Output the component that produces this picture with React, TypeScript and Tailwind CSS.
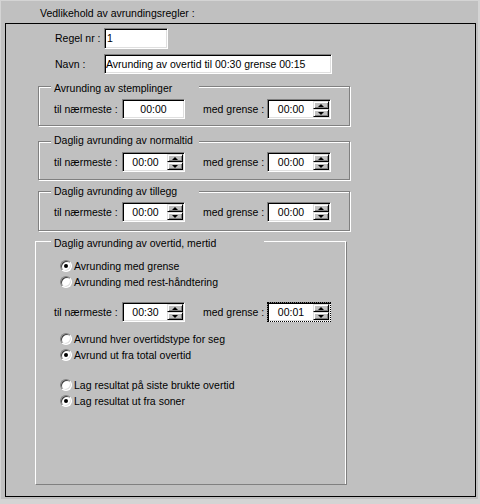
import React from 'react';

type Kids = { children?: React.ReactNode; className?: string };

const Sunken: React.FC<Kids> = ({ children, className = '' }) => (
  <div
    className={`flex items-center bg-white border border-t-[#808080] border-l-[#808080] border-r-white border-b-white shadow-[inset_1px_1px_0_#000,inset_-1px_-1px_0_#dfdfdf] ${className}`}
  >
    {children}
  </div>
);

const SpinBtn: React.FC<{ up?: boolean }> = ({ up }) => (
  <div className="flex-1 flex items-center justify-center bg-[#c0c0c0] border border-t-[#dfdfdf] border-l-[#dfdfdf] border-r-black border-b-black shadow-[inset_1px_1px_0_#fff,inset_-1px_-1px_0_#808080]">
    {up ? (
      <span className="w-0 h-0 border-x-[3px] border-x-transparent border-b-[3px] border-b-black" />
    ) : (
      <span className="w-0 h-0 border-x-[3px] border-x-transparent border-t-[3px] border-t-black" />
    )}
  </div>
);

const TimeBox: React.FC<{ value: string; spin?: boolean; focus?: boolean; className?: string }> = ({
  value,
  spin = true,
  focus = false,
  className = '',
}) => (
  <Sunken
    className={`h-[20px] p-[1px] ${focus ? 'outline outline-1 outline-dotted outline-black outline-offset-[-1px]' : ''} ${className}`}
  >
    <span className="flex-1 text-center">{value}</span>
    {spin && (
      <div className="flex flex-col w-[16px] h-full">
        <SpinBtn up />
        <SpinBtn />
      </div>
    )}
  </Sunken>
);

const Radio: React.FC<{ checked?: boolean; label: string }> = ({ checked, label }) => (
  <div className="flex items-center h-[16px] pl-[24px]">
    <div className="w-[12px] h-[12px] rounded-full bg-white border border-t-[#808080] border-l-[#808080] border-r-white border-b-white shadow-[inset_1px_1px_0_#404040,inset_-1px_-1px_0_#dfdfdf] flex items-center justify-center">
      {checked && <div className="w-[4px] h-[4px] rounded-full bg-black" />}
    </div>
    <span className="ml-[2px]">{label}</span>
  </div>
);

const TimeRow: React.FC<{ a: string; b: string; spinA?: boolean; focusB?: boolean; className?: string }> = ({
  a,
  b,
  spinA = true,
  focusB = false,
  className = '',
}) => (
  <div className={`flex items-center h-[20px] ${className}`}>
    <span className="w-[68px]">til nærmeste :</span>
    <TimeBox value={a} spin={spinA} className="w-[63px]" />
    <span className="ml-[18px] w-[64px]">med grense :</span>
    <TimeBox value={b} focus={focusB} className="w-[64px]" />
  </div>
);

const Group: React.FC<Kids & { title: string; titleClass: string }> = ({ title, titleClass, className = '', children }) => (
  <div
    className={`relative w-[312px] border border-[#808080] shadow-[inset_1px_1px_0_#fff,1px_1px_0_#fff] ${className}`}
  >
    <span className={`absolute h-[13px] bg-[#c0c0c0] pl-[3px] whitespace-nowrap ${titleClass}`}>{title}</span>
    {children}
  </div>
);

export default function App() {
  return (
    <div className="w-[480px] h-[504px] bg-[#d4d4d4] pt-[1px] pl-[1px]">
      <div className="w-[477px] h-[498px] bg-[#c0c0c0] text-black text-[10.5px] leading-[13px] font-['Liberation_Sans',Arial,sans-serif]">
        <div className="h-[22px] pt-[6px] pl-[39px]">Vedlikehold av avrundingsregler :</div>

        <div className="ml-[4px] w-[471px] h-[474px] border border-black">
          <div className="mt-[4px] flex items-center h-[21px]">
            <span className="ml-[49px] w-[49px]">Regel nr :</span>
            <Sunken className="w-[64px] h-[21px] pl-[2px]">1</Sunken>
          </div>
          <div className="mt-[5px] flex items-center h-[20px]">
            <span className="ml-[49px] w-[49px]">Navn :</span>
            <Sunken className="w-[228px] h-[20px] pl-[1px]">Avrunding av overtid til 00:30 grense 00:15</Sunken>
          </div>

          <Group
            title="Avrunding av stemplinger"
            titleClass="left-[12px] top-[-5px] w-[148px]"
            className="ml-[32px] mt-[12px] h-[40px] pt-[12px] pl-[15px]"
          >
            <TimeRow a="00:00" b="00:00" spinA={false} />
          </Group>

          <Group
            title="Daglig avrunding av normaltid"
            titleClass="left-[12px] top-[-8px] w-[148px]"
            className="ml-[32px] mt-[15px] h-[39px] pt-[10px] pl-[15px]"
          >
            <TimeRow a="00:00" b="00:00" />
          </Group>

          <Group
            title="Daglig avrunding av tillegg"
            titleClass="left-[12px] top-[-7px] w-[148px]"
            className="ml-[32px] mt-[11px] h-[40px] pt-[10px] pl-[15px]"
          >
            <TimeRow a="00:00" b="00:00" />
          </Group>

          <div className="relative ml-[29px] mt-[10px] w-[312px] h-[244px] border border-t-white border-l-white border-r-[#808080] border-b-[#808080] shadow-[inset_-1px_0_0_#fff]">
            <span className="absolute left-[15px] top-[-5px] h-[13px] w-[213px] bg-[#c0c0c0] pl-[3px] whitespace-nowrap">
              Daglig avrunding av overtid, mertid
            </span>
            <div className="mt-[16px]">
              <Radio checked label="Avrunding med grense" />
              <Radio label="Avrunding med rest-håndtering" />
            </div>
            <TimeRow a="00:30" b="00:01" focusB className="mt-[12px] pl-[18px]" />
            <div className="mt-[9px]">
              <Radio label="Avrund hver overtidstype for seg" />
              <Radio checked label="Avrund ut fra total overtid" />
            </div>
            <div className="mt-[14px]">
              <Radio label="Lag resultat på siste brukte overtid" />
              <Radio checked label="Lag resultat ut fra soner" />
            </div>
          </div>
        </div>
      </div>
    </div>
  );
}
